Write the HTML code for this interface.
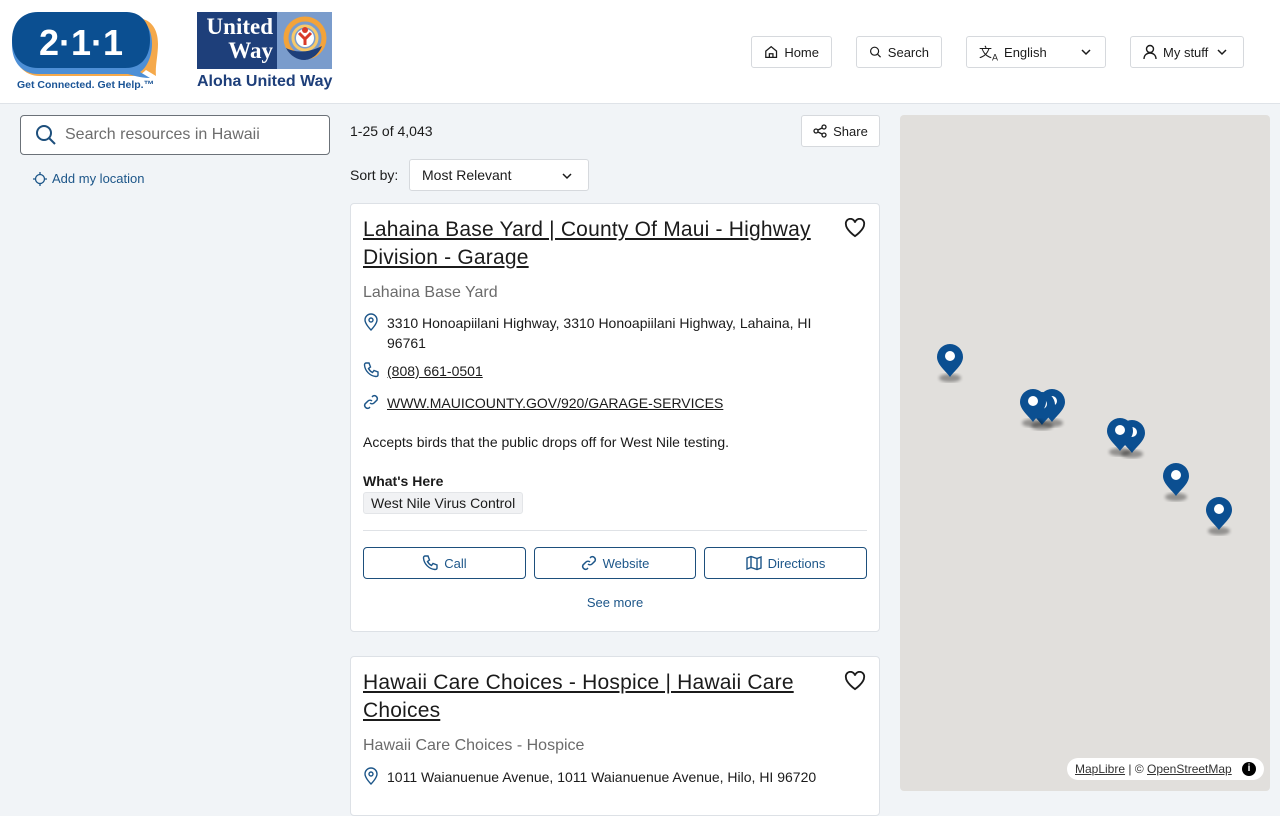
<!DOCTYPE html>
<html><head><meta charset="utf-8"><style>
*{box-sizing:border-box;margin:0;padding:0}
body{width:1280px;height:800px;overflow:hidden;background:#f1f4f7;font-family:"Liberation Sans",sans-serif;color:#1b1b1b;position:relative}
.hdr{position:absolute;left:0;top:0;width:1280px;height:104px;background:#fff;border-bottom:1px solid #dfe3e8}
.nb{position:absolute;top:36px;height:32px;border:1px solid #d6d9dd;border-radius:3px;background:#fff;font-size:13px;display:flex;align-items:center;gap:6px;padding:0 12px;color:#1b1b1b}
.abs{position:absolute}
.card{position:absolute;left:350px;width:530px;background:#fff;border:1px solid #dde1e6;border-radius:4px}
.ttl{position:absolute;left:12px;font-size:21px;line-height:28px;text-decoration:underline;color:#1b1b1b;width:470px;letter-spacing:0.2px}
.sub{position:absolute;left:12px;font-size:16px;color:#6b6b6b}
.row{position:absolute;left:12px;font-size:14px;line-height:20px;display:flex;gap:8px;color:#1b1b1b}
.btn{position:absolute;top:343px;height:32px;border:1px solid #1d4f7c;border-radius:4px;color:#1d5689;font-size:13px;display:flex;align-items:center;justify-content:center;gap:6px}
.chev{position:absolute;right:14px;top:11px}
</style></head><body>
<div class="hdr">
 <svg class="abs" style="left:10px;top:10px" width="150" height="72" viewBox="0 0 150 72">
  <path d="M30 8h96c14 0 22 10 22 26 0 12 -3 22 -2 32l-10-6c-4 4-8 6-14 6H30C14 66 4 54 4 37S14 8 30 8z" fill="#f5a94b"/>
  <path d="M28 6h90c16 0 24 12 24 28s-8 26-12 28l10 6c-10 0-18-3-22-4H28C12 64 2 52 2 35S12 6 28 6z" fill="#4d8fd6"/>
  <path d="M28 2h88c16 0 24 12 24 28s-8 28-24 28H28C12 58 2 47 2 30S12 2 28 2z" fill="#0b4f91"/>
  <text x="71" y="45" font-family="Liberation Sans" font-weight="bold" font-size="36" fill="#fff" text-anchor="middle">2·1·1</text>
 </svg>
 <div class="abs" style="left:17px;top:79px;font-size:10.5px;font-weight:bold;color:#1a5496">Get Connected. Get Help.™</div>
 <div class="abs" style="left:197px;top:12px;width:135px;height:57px;background:#7a9ccc"></div>
 <div class="abs" style="left:197px;top:12px;width:80px;height:57px;background:#1e3f7a;color:#fff;font-family:'Liberation Serif',serif;font-weight:bold;font-size:23px;line-height:24px;padding:3px 4px 0 0;text-align:right">United<br>Way</div>
 <svg class="abs" style="left:282px;top:16px" width="46" height="48" viewBox="0 0 46 48"><circle cx="23" cy="22" r="19" fill="none" stroke="#f3a33a" stroke-width="5"/><circle cx="23" cy="22" r="12" fill="none" stroke="#f7c96a" stroke-width="3"/><circle cx="23" cy="22" r="9" fill="#fff"/><circle cx="23" cy="14" r="3" fill="#d83a2a"/><path d="M17 17l6 6 6-6M23 23v6" stroke="#d83a2a" stroke-width="3" fill="none"/><path d="M4 32c8 4 20 6 36-2-4 10-12 14-18 14S8 40 4 32z" fill="#1e3f7a"/></svg>
 <div class="abs" style="left:197px;top:73px;font-size:16px;font-weight:bold;color:#1e3f7a">Aloha United Way</div>
 <div class="nb" style="left:751px;width:81px"><svg width="16" height="16" viewBox="0 0 16 16" fill="none" stroke="#1b1b1b" stroke-width="1.4"><path d="M2 7l6-5 6 5v7H2z"/><path d="M6 14v-4h4v4"/></svg>Home</div>
 <div class="nb" style="left:856px;width:86px"><svg width="16" height="16" viewBox="0 0 16 16" fill="none" stroke="#1b1b1b" stroke-width="1.5"><circle cx="7" cy="7" r="5"/><path d="M11 11l3.5 3.5"/></svg>Search</div>
 <div class="nb" style="left:966px;width:140px"><span style="font-size:13px">文<sub style="font-size:9px">A</sub></span>English<svg class="chev" width="10" height="8" viewBox="0 0 10 8" fill="none" stroke="#1b1b1b" stroke-width="1.5"><path d="M1 2l4 4 4-4"/></svg></div>
 <div class="nb" style="left:1130px;width:114px"><svg width="14" height="16" viewBox="0 0 14 16" fill="none" stroke="#1b1b1b" stroke-width="1.4"><circle cx="7" cy="5" r="3.5"/><path d="M1 15c0-4 3-6 6-6s6 2 6 6"/></svg>My stuff<svg class="chev" style="right:16px" width="10" height="8" viewBox="0 0 10 8" fill="none" stroke="#1b1b1b" stroke-width="1.5"><path d="M1 2l4 4 4-4"/></svg></div>
</div>
<div class="abs" style="left:20px;top:115px;width:310px;height:40px;border:1px solid #6b7178;border-radius:4px;background:#fff;display:flex;align-items:center;padding-left:14px;gap:8px;font-size:16px;color:#6d6d6d"><svg width="22" height="22" viewBox="0 0 22 22" fill="none" stroke="#1d4f7c" stroke-width="2"><circle cx="9" cy="9" r="7"/><path d="M14 14l6 6"/></svg>Search resources in Hawaii</div>
<div class="abs" style="left:33px;top:171px;font-size:13px;color:#1d5689;display:flex;gap:5px;align-items:center"><svg width="14" height="14" viewBox="0 0 14 14" fill="none" stroke="#1d5689" stroke-width="1.3"><circle cx="7" cy="7" r="4.5"/><path d="M7 0v3M7 11v3M0 7h3M11 7h3"/></svg>Add my location</div>
<div class="abs" style="left:350px;top:123px;font-size:14px">1-25 of 4,043</div>
<div class="abs" style="left:801px;top:115px;width:79px;height:32px;border:1px solid #d6d9dd;border-radius:3px;background:#fff;font-size:13px;display:flex;align-items:center;justify-content:center;gap:6px"><svg width="14" height="14" viewBox="0 0 14 14" fill="none" stroke="#1b1b1b" stroke-width="1.3"><circle cx="11" cy="3" r="2"/><circle cx="3" cy="7" r="2"/><circle cx="11" cy="11" r="2"/><path d="M5 6l4-2M5 8l4 2"/></svg>Share</div>
<div class="abs" style="left:350px;top:167px;font-size:14px">Sort by:</div>
<div class="abs" style="left:409px;top:159px;width:180px;height:32px;border:1px solid #d6d9dd;border-radius:3px;background:#fff;font-size:14px;padding:7px 12px">Most Relevant<svg class="chev" style="right:16px;top:12px" width="10" height="8" viewBox="0 0 10 8" fill="none" stroke="#1b1b1b" stroke-width="1.5"><path d="M1 2l4 4 4-4"/></svg></div>

<div class="card" style="top:203px;height:429px">
 <div class="ttl" style="top:12px">Lahaina Base Yard | County Of Maui - Highway Division - Garage</div>
 <svg class="abs" style="left:493px;top:14px" width="22" height="20" viewBox="0 0 24 22" fill="none" stroke="#1b1b1b" stroke-width="2"><path d="M12 20S2 13 2 7a5 5 0 0 1 10-2 5 5 0 0 1 10 2c0 6-10 13-10 13z"/></svg>
 <div class="sub" style="top:80px">Lahaina Base Yard</div>
 <div class="row" style="top:109px"><svg width="16" height="18" viewBox="0 0 16 18" fill="none" stroke="#1d5689" stroke-width="1.4"><path d="M8 17s-6-6-6-10a6 6 0 0 1 12 0c0 4-6 10-6 10z"/><circle cx="8" cy="7" r="2"/></svg><span style="width:450px">3310 Honoapiilani Highway, 3310 Honoapiilani Highway, Lahaina, HI 96761</span></div>
 <div class="row" style="top:157px"><svg width="16" height="18" viewBox="0 0 16 16" fill="none" stroke="#1d5689" stroke-width="1.4"><path d="M3 1h3l1.5 4-2 1.5a9 9 0 0 0 4 4l1.5-2 4 1.5v3c0 1-1 1.5-2 1.5C7 14 2 9 1.5 3 1.5 2 2 1 3 1z"/></svg><u>(808) 661-0501</u></div>
 <div class="row" style="top:189px"><svg width="16" height="18" viewBox="0 0 16 16" fill="none" stroke="#1d5689" stroke-width="1.5"><path d="M7 9a3 3 0 0 0 4 0l3-3a3 3 0 0 0-4-4L9 3M9 7a3 3 0 0 0-4 0l-3 3a3 3 0 0 0 4 4l1-1"/></svg><u>WWW.MAUICOUNTY.GOV/920/GARAGE-SERVICES</u></div>
 <div class="row" style="top:228px">Accepts birds that the public drops off for West Nile testing.</div>
 <div class="row" style="top:267px;font-weight:bold">What's Here</div>
 <div class="abs" style="left:12px;top:288px;height:22px;padding:2px 7px;background:#f1f2f4;border:1px solid #e3e5e8;border-radius:3px;font-size:14px">West Nile Virus Control</div>
 <div class="abs" style="left:12px;top:326px;width:504px;border-top:1px solid #dfe2e6"></div>
 <div class="btn" style="left:12px;width:163px"><svg width="16" height="16" viewBox="0 0 16 16" fill="none" stroke="#1d5689" stroke-width="1.4"><path d="M3 1h3l1.5 4-2 1.5a9 9 0 0 0 4 4l1.5-2 4 1.5v3c0 1-1 1.5-2 1.5C7 14 2 9 1.5 3 1.5 2 2 1 3 1z"/></svg>Call</div>
 <div class="btn" style="left:183px;width:162px"><svg width="16" height="16" viewBox="0 0 16 16" fill="none" stroke="#1d5689" stroke-width="1.5"><path d="M7 9a3 3 0 0 0 4 0l3-3a3 3 0 0 0-4-4L9 3M9 7a3 3 0 0 0-4 0l-3 3a3 3 0 0 0 4 4l1-1"/></svg>Website</div>
 <div class="btn" style="left:353px;width:163px"><svg width="16" height="16" viewBox="0 0 16 16" fill="none" stroke="#1d5689" stroke-width="1.4"><path d="M1 3l4-1.5 6 2 4-1.5v11l-4 1.5-6-2-4 1.5zM5 1.5v11M11 3.5v11"/></svg>Directions</div>
 <div class="abs" style="left:0;width:528px;top:391px;text-align:center;font-size:13px;color:#1d5689">See more</div>
</div>

<div class="card" style="top:656px;height:160px">
 <div class="ttl" style="top:12px">Hawaii Care Choices - Hospice | Hawaii Care Choices</div>
 <svg class="abs" style="left:493px;top:14px" width="22" height="20" viewBox="0 0 24 22" fill="none" stroke="#1b1b1b" stroke-width="2"><path d="M12 20S2 13 2 7a5 5 0 0 1 10-2 5 5 0 0 1 10 2c0 6-10 13-10 13z"/></svg>
 <div class="sub" style="top:80px">Hawaii Care Choices - Hospice</div>
 <div class="row" style="top:110px"><svg width="16" height="18" viewBox="0 0 16 18" fill="none" stroke="#1d5689" stroke-width="1.4"><path d="M8 17s-6-6-6-10a6 6 0 0 1 12 0c0 4-6 10-6 10z"/><circle cx="8" cy="7" r="2"/></svg>1011 Waianuenue Avenue, 1011 Waianuenue Avenue, Hilo, HI 96720</div>
</div>

<div class="abs" style="left:900px;top:115px;width:370px;height:676px;background:#e1dfdc;border-radius:4px;overflow:hidden">
 <svg width="370" height="676" viewBox="900 115 370 676">
  <defs><filter id="b"><feGaussianBlur stdDeviation="1.5"/></filter><g id="p"><ellipse cx="0" cy="21" rx="11" ry="4" fill="#000" opacity=".35" filter="url(#b)"/><path d="M0 20C-4 14-13 8-13 0a13 13 0 0 1 26 0c0 8-9 14-13 20z" fill="#0b4f91"/><circle cx="0" cy="-1" r="5" fill="#fff"/></g></defs>
  <use href="#p" x="950" y="357"/>
  <use href="#p" x="1052" y="402"/>
  <use href="#p" x="1042" y="405"/>
  <use href="#p" x="1033" y="402"/>
  <use href="#p" x="1132" y="433"/>
  <use href="#p" x="1120" y="431"/>
  <use href="#p" x="1176" y="476"/>
  <use href="#p" x="1219" y="510"/>
 </svg>
 <div class="abs" style="left:167px;top:643px;width:197px;height:22px;background:#fff;border-radius:11px;font-size:12px;padding:4px 0 0 8px;color:#333"><u>MapLibre</u> | © <u>OpenStreetMap</u><span style="position:absolute;right:8px;top:4px;width:14px;height:14px;border-radius:50%;background:#000;color:#fff;font-size:10px;font-weight:bold;text-align:center;line-height:14px">i</span></div>
</div>
</body></html>
